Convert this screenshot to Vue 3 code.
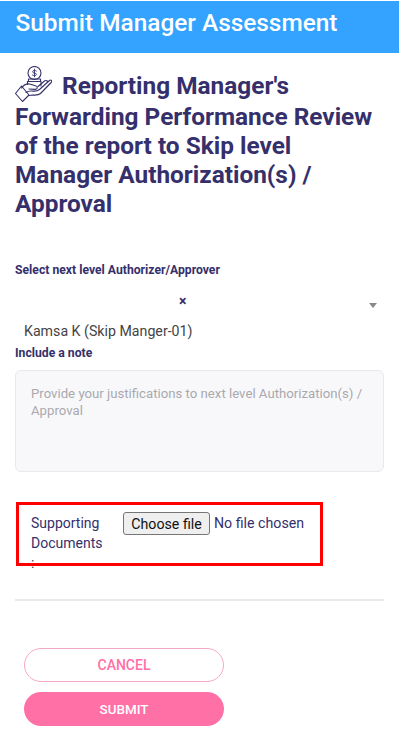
<template>
  <div class="page">
    <header class="bar">Submit Manager Assessment</header>
    <main class="content">
      <h1 class="title">
        <svg class="icon" viewBox="0 0 37 36" fill="none" stroke="#35306b" stroke-width="1.1" stroke-linejoin="round" stroke-linecap="round">
          <circle cx="19.500" cy="7" r="6.500" />
          <path d="M19.500 3.200v7.600M21.400 5c-.9-.9-3.800-.9-3.800.8 0 1.800 3.800.7 3.800 2.600 0 1.600-3 1.500-4 .6" stroke-width=".9" />
          <path d="M13.500 15.500v-2.500h12v2.500M12.500 15.500h13.500v4.500" />
          <path d="M12.500 15.500v3" />
          <path d="M0.500 27.500l6-7.500 7.500 9-6.500 6.500z" />
          <path d="M6.500 22c2.500-3.500 5-4.500 8-4l6 1.800c2.500.6 2.400 3.400-.2 3.600l-6.300-.4" />
          <path d="M11 26.500c2-1.500 3.500-1.800 6-1.500 3 .4 5.500.3 7.500-1.500l10-9c1.700-1.300 3 .6 1.700 2l-10.700 11c-1.500 1.500-4 1.800-8 1.500l-3 .5" />
          <path d="M23 20.500l6.500-5.500c1.700-1.300 3.500.3 3 1" />
        </svg>
        <span>Reporting Manager's</span><br />Forwarding Performance Review of the report to Skip level Manager Authorization(s) / Approval
      </h1>

      <label class="label first">Select next level Authorizer/Approver</label>
      <div class="select">
        <span class="clear">×</span>
        <span class="arrow"></span>
        <div class="value">Kamsa K (Skip Manger-01)</div>
      </div>

      <label class="label">Include a note</label>
      <textarea class="note" placeholder="Provide your justifications to next level Authorization(s) / Approval"></textarea>

      <div class="upload">
        <div class="upload-label">Supporting Documents<span class="colon">:</span></div>
        <button class="choose" type="button">Choose file</button>
        <span class="nofile">No file chosen</span>
      </div>

      <hr class="rule" />

      <div class="actions">
        <button class="btn cancel" type="button">CANCEL</button>
        <button class="btn submit" type="button">SUBMIT</button>
      </div>
    </main>
  </div>
</template>

<script setup>
</script>

<style>
html, body { margin: 0; background: #fff; }
</style>

<style scoped>
.page {
  width: 399px;
  height: 747px;
  overflow: hidden;
  font-family: Roboto, "Noto Sans", sans-serif;
  color: #35306b;
}
.bar {
  margin-top: 1px;
  height: 52px;
  background: #33a3ff;
  color: #fff;
  font-size: 24.4px;
  font-weight: 500;
  line-height: 44px;
  padding-left: 15.500px;
}
.content { padding: 0 15px; }
.title {
  margin: 18px 0 0;
  font-size: 24.4px;
  font-weight: 700;
  line-height: 29px;
  color: #35306b;
}
.title span { margin-left: 3px; }
.icon {
  width: 37px;
  height: 36px;
  vertical-align: -8px;
  margin: -8px 7px 0 0;
}
.label {
  display: block;
  font-size: 12.2px;
  font-weight: 700;
  line-height: 14px;
}
.label.first { margin-top: 45px; }
.select { position: relative; height: 69px; }
.clear {
  position: absolute;
  left: 164px;
  top: 16px;
  font-size: 14px;
  font-weight: 700;
  line-height: 16px;
}
.arrow {
  position: absolute;
  left: 354px;
  top: 26px;
  border-left: 4px solid transparent;
  border-right: 4px solid transparent;
  border-top: 5px solid #888;
}
.value {
  position: absolute;
  left: 9px;
  top: 46px;
  font-size: 14.2px;
  line-height: 16px;
  color: #444;
}
.note {
  display: block;
  box-sizing: border-box;
  width: 369px;
  height: 102px;
  margin-top: 10px;
  padding: 14px 15px;
  border: 1px solid #e8e8ee;
  border-radius: 6px;
  background: #f8f8fb;
  font: 13.2px/17px Roboto, sans-serif;
  resize: none;
  outline: none;
}
.note::placeholder { color: #a9a9ae; }
.upload {
  position: relative;
  display: flex;
  align-items: flex-start;
  box-sizing: border-box;
  width: 307px;
  height: 64px;
  margin: 30px 0 0 1px;
  padding: 11px 0 0 15px;
  font-size: 14px;
  line-height: 20px;
}
.upload::after {
  content: "";
  position: absolute;
  inset: 0;
  border: 3px solid #f00;
  pointer-events: none;
}
.upload-label { width: 92px; flex: none; }
.colon { display: block; color: #444; }
.choose {
  box-sizing: border-box;
  width: 87px;
  height: 23px;
  margin-top: -1px;
  padding: 0;
  border: 1px solid #767676;
  border-radius: 3px;
  background: #efefef;
  color: #111;
  font: 14.2px Roboto, sans-serif;
}
.nofile {
  margin: -1px 0 0 4px;
  font-size: 14.2px;
  line-height: 23px;
  white-space: nowrap;
}
.rule {
  margin: 33px 0 0;
  border: 0;
  height: 2px;
  background: #e9e9e9;
  width: 369px;
}
.actions {
  display: flex;
  flex-direction: column;
  gap: 10px;
  margin: 47px 0 0 9px;
  width: 200px;
}
.btn {
  box-sizing: border-box;
  height: 34px;
  border-radius: 17px;
  font: 500 14px Roboto, sans-serif;
}
.cancel { background: #fff; border: 1px solid #f7a8c8; color: #ff70a6; }
.submit { background: #ff70a6; border: 0; color: #fff; font-size: 13.4px; }
</style>
